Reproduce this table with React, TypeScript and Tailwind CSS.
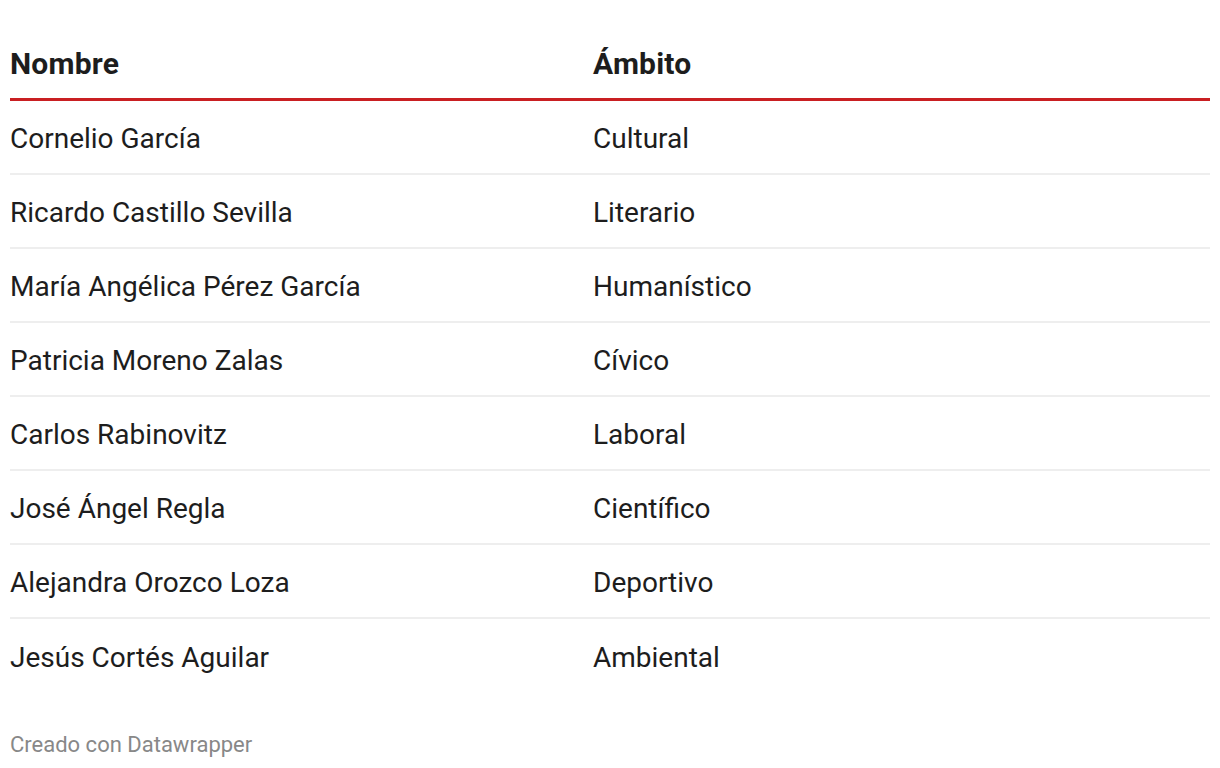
const ROWS = [
  ['Cornelio García', 'Cultural'],
  ['Ricardo Castillo Sevilla', 'Literario'],
  ['María Angélica Pérez García', 'Humanístico'],
  ['Patricia Moreno Zalas', 'Cívico'],
  ['Carlos Rabinovitz', 'Laboral'],
  ['José Ángel Regla', 'Científico'],
  ['Alejandra Orozco Loza', 'Deportivo'],
  ['Jesús Cortés Aguilar', 'Ambiental'],
]

export default function App() {
  return (
    <div className="w-[1220px] h-[768px] bg-white px-[10px] text-[#1d1d1d] font-['Roboto',sans-serif]">
      <div className="grid grid-cols-[583px_1fr] h-[101px] items-end border-b-[3px] border-[#c91f22]">
        <div className="text-[30px] font-bold leading-none pb-[19px] tracking-[0.2px]">Nombre</div>
        <div className="text-[30px] font-bold leading-none pb-[19px] tracking-[0.2px]">Ámbito</div>
      </div>
      {ROWS.map(([name, area], i) => (
        <div
          key={name}
          className={`grid grid-cols-[583px_1fr] items-center text-[28px] pt-[4px] ${
            i < ROWS.length - 1 ? 'h-[74px] border-b-2 border-[#eeeeee]' : 'h-[74px]'
          }`}
        >
          <div>{name}</div>
          <div>{area}</div>
        </div>
      ))}
      <div className="mt-[41px] text-[22px] text-[#888888] leading-none">Creado con Datawrapper</div>
    </div>
  )
}
